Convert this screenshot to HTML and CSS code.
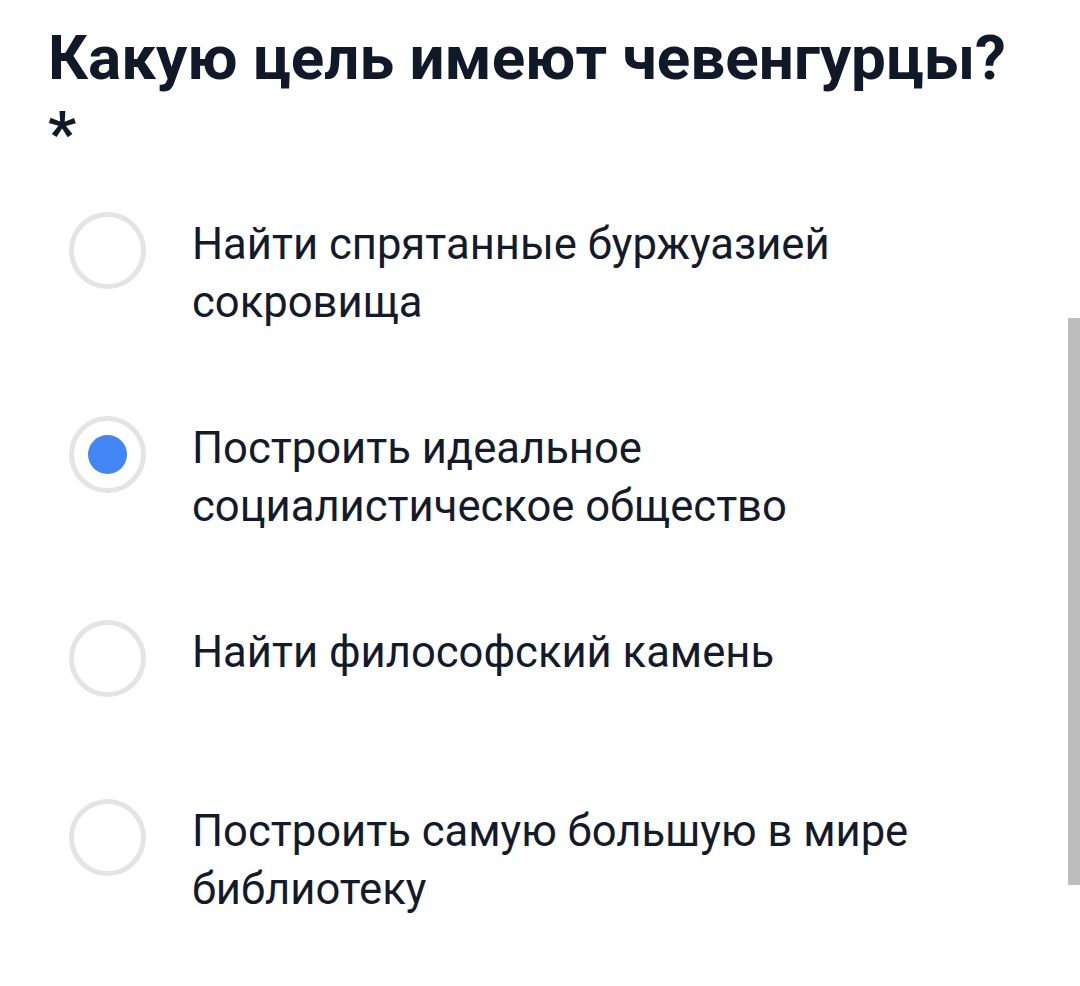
FILE: index.html
```html
<!DOCTYPE html>
<html lang="ru">
<head>
<meta charset="utf-8">
<title>Вопрос</title>
<link rel="stylesheet" href="styles.css">
</head>
<body>
<main class="question">
  <h1 class="question-title">Какую цель имеют чевенгурцы? <span class="required">*</span></h1>
  <div class="options">
    <label class="option">
      <span class="radio"></span>
      <span class="option-text">Найти спрятанные буржуазией сокровища</span>
    </label>
    <label class="option">
      <span class="radio radio-checked"><span class="radio-dot"></span></span>
      <span class="option-text">Построить идеальное социалистическое общество</span>
    </label>
    <label class="option">
      <span class="radio"></span>
      <span class="option-text">Найти философский камень</span>
    </label>
    <label class="option">
      <span class="radio"></span>
      <span class="option-text">Построить самую большую в мире библиотеку</span>
    </label>
  </div>
</main>
<div class="scrollbar"></div>
</body>
</html>
```

FILE: styles.css
```css
html, body {
  margin: 0;
  padding: 0;
  background: #ffffff;
}

body {
  font-family: Roboto, "Noto Sans", "Liberation Sans", sans-serif;
  color: #121a2e;
  width: 1080px;
  height: 986px;
  overflow: hidden;
}

.question {
  padding: 20px 0 0 48px;
}

.question-title {
  margin: 0;
  padding-right: 48px;
  font-size: 62px;
  line-height: 76px;
  font-weight: 700;
  color: #111827;
}

.options {
  margin-top: 40px;
  padding-left: 21px;
  padding-right: 80px;
  display: flex;
  flex-direction: column;
  gap: 84px;
}

.option {
  display: flex;
  align-items: flex-start;
  min-height: 95px;
}

.radio {
  flex: none;
  box-sizing: border-box;
  width: 77px;
  height: 77px;
  border: 5px solid #e4e4e4;
  border-radius: 50%;
  display: flex;
  align-items: center;
  justify-content: center;
}

.radio-dot {
  width: 39px;
  height: 39px;
  border-radius: 50%;
  background: #4285f4;
}

.option-text {
  margin-left: 46px;
  padding-top: 4px;
  font-size: 43.6px;
  line-height: 58px;
  color: #131a2c;
}

.scrollbar {
  position: absolute;
  right: 0;
  top: 318px;
  width: 12px;
  height: 567px;
  background: #bdbdbd;
}
```
